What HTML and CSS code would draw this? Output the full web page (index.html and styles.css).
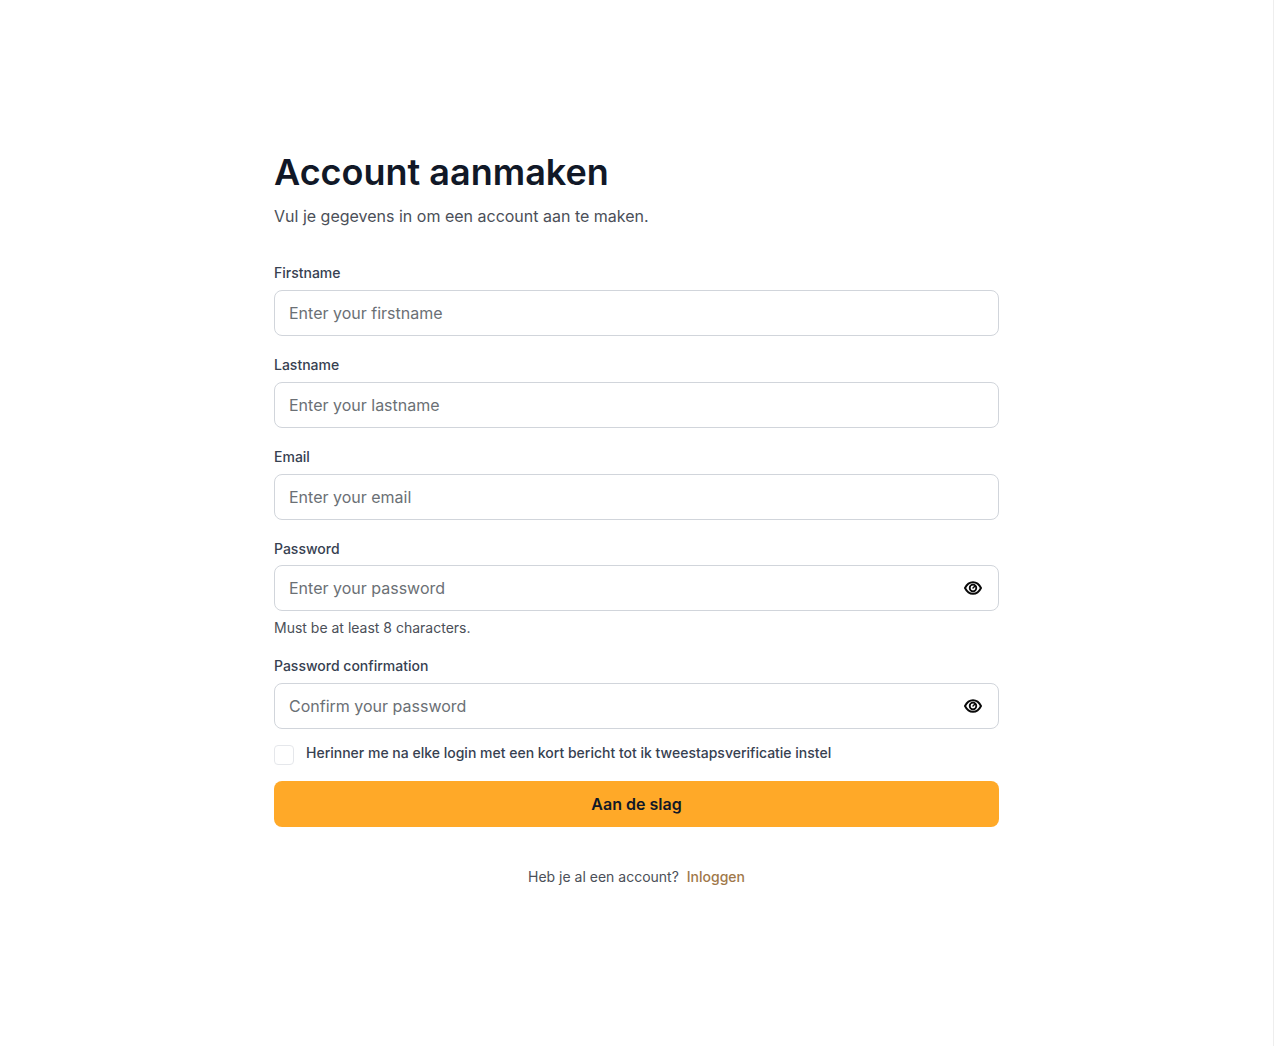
FILE: index.html
```html
<!DOCTYPE html>
<html lang="en">
<head>
  <meta charset="UTF-8" />
  <meta name="viewport" content="width=device-width, initial-scale=1.0"/>
  <title>Account aanmaken</title>
  <link rel="stylesheet" href="styles.css">
</head>
<body>
  <main class="page">
    <h1 class="title">Account aanmaken</h1>
    <p class="subtitle">Vul je gegevens in om een account aan te maken.</p>

    <form class="form">
      <div class="field">
        <label class="label" for="firstname">Firstname</label>
        <div class="input-wrap">
          <input class="input" id="firstname" type="text" placeholder="Enter your firstname">
        </div>
      </div>

      <div class="field">
        <label class="label" for="lastname">Lastname</label>
        <div class="input-wrap">
          <input class="input" id="lastname" type="text" placeholder="Enter your lastname">
        </div>
      </div>

      <div class="field">
        <label class="label" for="email">Email</label>
        <div class="input-wrap">
          <input class="input" id="email" type="email" placeholder="Enter your email">
        </div>
      </div>

      <div class="field">
        <label class="label" for="password">Password</label>
        <div class="input-wrap">
          <input class="input" id="password" type="password" placeholder="Enter your password">
          <button class="eye" type="button" aria-label="Show password">
            <svg viewBox="0 0 22 22" width="22" height="22" fill="none" stroke="currentColor" stroke-width="2" stroke-linecap="round" stroke-linejoin="round">
              <path d="M3 11C4.800 7.400 7.600 5.200 11 5.200s6.200 2.200 8 5.800c-1.800 3.600-4.600 5.800-8 5.800S4.800 14.600 3 11z"/>
              <circle cx="11" cy="11" r="3.300" stroke-width="1.800"/>
              <path d="M11 11l1.500-1.500" stroke-width="1.400"/>
            </svg>
          </button>
        </div>
        <p class="hint">Must be at least 8 characters.</p>
      </div>

      <div class="field">
        <label class="label" for="confirm">Password confirmation</label>
        <div class="input-wrap">
          <input class="input" id="confirm" type="password" placeholder="Confirm your password">
          <button class="eye" type="button" aria-label="Show password">
            <svg viewBox="0 0 22 22" width="22" height="22" fill="none" stroke="currentColor" stroke-width="2" stroke-linecap="round" stroke-linejoin="round">
              <path d="M3 11C4.800 7.400 7.600 5.200 11 5.200s6.200 2.200 8 5.800c-1.800 3.600-4.600 5.800-8 5.800S4.800 14.600 3 11z"/>
              <circle cx="11" cy="11" r="3.300" stroke-width="1.800"/>
              <path d="M11 11l1.500-1.500" stroke-width="1.400"/>
            </svg>
          </button>
        </div>
      </div>

      <label class="check">
        <input class="checkbox" type="checkbox">
        <span>Herinner me na elke login met een kort bericht tot ik tweestapsverificatie instel</span>
      </label>

      <button class="submit" type="submit">Aan de slag</button>
    </form>

    <p class="footer">Heb je al een account? <a class="link" href="#">Inloggen</a></p>
  </main>
</body>
</html>
```

FILE: styles.css
```css
* {
  box-sizing: border-box;
}

html, body {
  margin: 0;
  height: 100%;
}

body {
  background-color: #fff;
  color: #111827;
  font-family: Inter, "Liberation Sans", sans-serif;
  border-right: 1px solid #eeeeee;
}

.page {
  width: 725px;
  margin-left: 274px;
  padding-top: 152px;
}

.title {
  margin: 0;
  font-size: 36px;
  line-height: 40px;
  font-weight: 600;
  color: #111827;
}

.subtitle {
  margin: 12px 0 0;
  font-size: 16px;
  line-height: 24px;
  color: #4b4f58;
}

.form {
  margin-top: 35.25px;
  display: flex;
  flex-direction: column;
}

.field {
  margin-bottom: 19px;
}

.label {
  display: block;
  margin-bottom: 6.75px;
  font-size: 14px;
  line-height: 20px;
  font-weight: 500;
  color: #374151;
}

.input-wrap {
  position: relative;
}

.input {
  display: block;
  width: 100%;
  height: 46px;
  padding: 0 14px;
  border: 1px solid #d1d5db;
  border-radius: 8px;
  background: #fff;
  font-family: inherit;
  font-size: 16px;
  color: #111827;
  outline: none;
}

.input::placeholder {
  color: #6b7075;
  opacity: 1;
}

/* oog-icoon ligt over het invoerveld */
.eye {
  position: absolute;
  top: 12px;
  right: 15px;
  width: 22px;
  height: 22px;
  padding: 0;
  border: none;
  background: none;
  color: #0a0a0a;
  cursor: pointer;
}

.eye svg {
  display: block;
}

.hint {
  margin: 7px 0 -1px;
  font-size: 14px;
  line-height: 20px;
  color: #4b4f58;
}

.check {
  display: flex;
  align-items: flex-start;
  gap: 12px;
  margin-top: -5px;
  font-size: 14px;
  line-height: 20px;
  font-weight: 500;
  color: #374151;
}

.checkbox {
  appearance: none;
  margin: 2px 0 0;
  width: 20px;
  height: 20px;
  border: 1px solid #e5e7eb;
  border-radius: 4px;
  background: #fff;
}

.submit {
  margin-top: 16px;
  height: 46px;
  border: none;
  border-radius: 8px;
  background-color: #ffa928;
  color: #111827;
  font-family: inherit;
  font-size: 16px;
  font-weight: 600;
  cursor: pointer;
}

.footer {
  margin: 40px 0 0;
  text-align: center;
  font-size: 14px;
  line-height: 20px;
  color: #4b4f58;
}

.link {
  margin-left: 4px;
  color: #a0784a;
  font-weight: 500;
  text-decoration: none;
}
```
